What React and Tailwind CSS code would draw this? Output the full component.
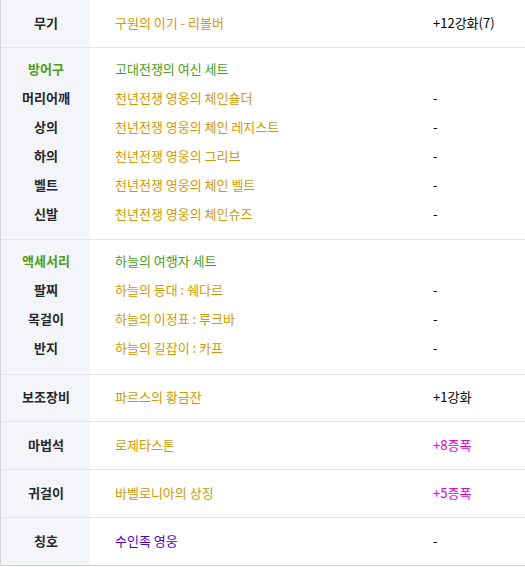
const GOLD = 'text-[#d09a00]';

const groups = [
  {
    type: 'single',
    label: '무기',
    name: '구원의 이기 - 리볼버',
    nameColor: GOLD,
    extra: '+12강화(7)',
    extraColor: 'text-black',
    h: 'h-[47px]',
  },
  {
    type: 'set',
    label: '방어구',
    setName: '고대전쟁의 여신 세트',
    items: [
      ['머리어깨', '천년전쟁 영웅의 체인숄더'],
      ['상의', '천년전쟁 영웅의 체인 레지스트'],
      ['하의', '천년전쟁 영웅의 그리브'],
      ['벨트', '천년전쟁 영웅의 체인 벨트'],
      ['신발', '천년전쟁 영웅의 체인슈즈'],
    ],
    pb: 'pb-[10px]',
  },
  {
    type: 'set',
    label: '액세서리',
    setName: '하늘의 여행자 세트',
    items: [
      ['팔찌', '하늘의 등대 : 쉐다르'],
      ['목걸이', '하늘의 이정표 : 루크바'],
      ['반지', '하늘의 길잡이 : 카프'],
    ],
    pb: 'pb-[11px]',
  },
  {
    type: 'single',
    label: '보조장비',
    name: '파르스의 황금잔',
    nameColor: GOLD,
    extra: '+1강화',
    extraColor: 'text-black',
    h: 'h-[46px]',
  },
  {
    type: 'single',
    label: '마법석',
    name: '로제타스톤',
    nameColor: GOLD,
    extra: '+8증폭',
    extraColor: 'text-[#e000e0]',
    h: 'h-[47px]',
  },
  {
    type: 'single',
    label: '귀걸이',
    name: '바벨로니아의 상징',
    nameColor: GOLD,
    extra: '+5증폭',
    extraColor: 'text-[#e000e0]',
    h: 'h-[47px]',
  },
  {
    type: 'single',
    label: '칭호',
    name: '수인족 영웅',
    nameColor: 'text-[#5000cc]',
    extra: '-',
    extraColor: 'text-black',
    h: 'h-[47px]',
  },
];

const Line = ({ label, labelColor = 'text-[#26262e]', name, nameColor, extra, extraColor = 'text-black', h }) => (
  <div className={`flex items-center pb-[2px] ${h}`}>
    <div className={`w-[90px] shrink-0 text-center font-bold ${labelColor}`}>{label}</div>
    <div className={`w-[318px] shrink-0 pl-6 ${nameColor}`}>{name}</div>
    <div className={`pl-6 ${extraColor}`}>{extra}</div>
  </div>
);

export default function App() {
  return (
    <div className="h-[567px] w-[525px] overflow-hidden bg-white text-[13px] font-['Noto_Sans_CJK_KR',sans-serif]">
      <div className="relative border-b border-l border-[#d4d4d8] border-b-[#d0d0d4]">
        <div className="absolute inset-y-0 left-0 w-[89px] bg-[#f4f5f9]" />
        <div className="relative">
          {groups.map((g, i) => (
            <div
              key={g.label}
              className={i < groups.length - 1 ? 'border-b border-[#e6e6e8]' : ''}
            >
              {g.type === 'single' ? (
                <Line
                  h={g.h}
                  label={g.label}
                  name={g.name}
                  nameColor={g.nameColor}
                  extra={g.extra}
                  extraColor={g.extraColor}
                />
              ) : (
                <div className={`pt-[7px] ${g.pb}`}>
                  <Line
                    h="h-[29px]"
                    label={g.label}
                    labelColor="text-[#4c9e16]"
                    name={g.setName}
                    nameColor="text-[#4c9e16]"
                    extra=""
                  />
                  {g.items.map(([label, name]) => (
                    <Line key={label} h="h-[29px]" label={label} name={name} nameColor={GOLD} extra="-" />
                  ))}
                </div>
              )}
            </div>
          ))}
        </div>
      </div>
    </div>
  );
}
